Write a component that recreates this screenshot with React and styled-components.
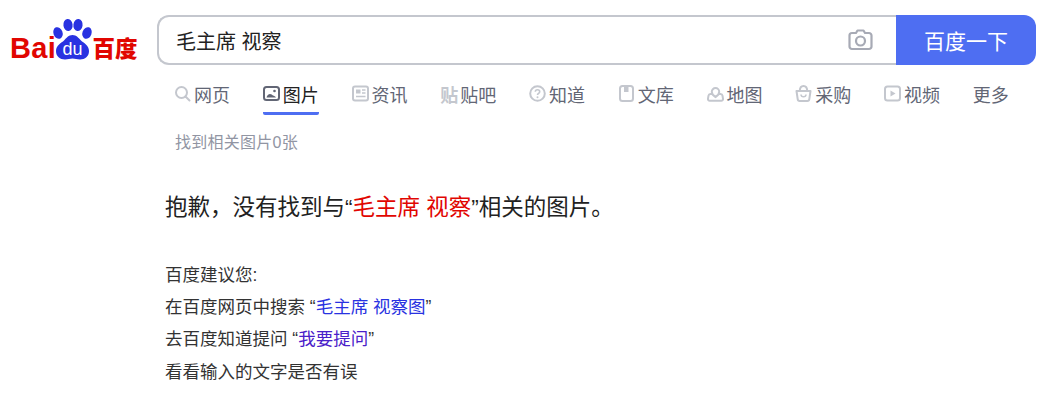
import React from "react";
import styled, { createGlobalStyle } from "styled-components";

const GlobalStyle = createGlobalStyle`
  html, body {
    margin: 0;
    padding: 0;
    background: #fff;
    font-family: "Liberation Sans", Arial, "Noto Sans CJK SC", sans-serif;
  }
`;

const Page = styled.div`
  width: 1045px;
  height: 403px;
  overflow: hidden;
`;

const Header = styled.header`
  display: flex;
  align-items: flex-start;
  padding: 15px 9px 0 10px;
`;

const LogoBox = styled.a`
  display: block;
  width: 127px;
  height: 44px;
  margin: 3px 20px 0 0;
  flex: none;
`;

const SearchForm = styled.form`
  flex: 1;
  display: flex;
  height: 50px;
`;

const SearchField = styled.div`
  flex: 1;
  display: flex;
  align-items: center;
  box-sizing: border-box;
  border: 2px solid #c4c7ce;
  border-right: 0;
  border-radius: 12px 0 0 12px;
  padding: 0 23px 0 18px;
`;

const SearchText = styled.span`
  flex: 1;
  font-size: 20px;
  margin-left: -1px;
  color: #222;
`;

const SearchButton = styled.button`
  width: 140px;
  border: 0;
  padding: 0;
  border-radius: 0 12px 12px 0;
  background: #4e6ef2;
  color: #fff;
  font-family: inherit;
  font-size: 21px;
`;

const Nav = styled.nav`
  display: flex;
  gap: 32.75px;
  padding: 16px 0 0 174px;
`;

const Tab = styled.a`
  display: flex;
  align-items: center;
  gap: 3px;
  height: 25px;
  padding-bottom: 6px;
  border-bottom: 3px solid transparent;
  border-radius: 0 0 2px 2px;
  font-size: 18px;
  white-space: nowrap;
  color: ${(p) => (p.$active ? "#222" : "#626675")};
  border-color: ${(p) => (p.$active ? "#4e6ef2" : "transparent")};
`;

const IconSvg = styled.svg`
  width: 17px;
  height: 17px;
  flex: none;
  fill: none;
  stroke: ${(p) => (p.$active ? "#626675" : "#c4c7ce")};
  stroke-width: 2;
`;

const GlyphIcon = styled.span`
  width: 17px;
  font-size: 18px;
  font-weight: 700;
  color: #c4c7ce;
`;

const Count = styled.p`
  margin: 18px 0 0 175px;
  font-size: 16px;
  letter-spacing: 0.25px;
  line-height: 20px;
  color: #9195a3;
`;

const Content = styled.main`
  padding: 39px 0 0 165px;
`;

const Message = styled.h2`
  margin: 0;
  font-size: 22.5px;
  font-weight: 400;
  line-height: 32px;
  color: #222;
`;

const Hit = styled.span`
  color: #e10601;
`;

const Suggestions = styled.ul`
  list-style: none;
  margin: 35px 0 0;
  padding: 0;
  font-size: 17.5px;
  line-height: 32.2px;
  color: #333;
`;

const SuggestLink = styled.a`
  color: ${(p) => (p.$visited ? "#4a20c9" : "#2932e1")};
`;

const Logo = () => (
  <svg width="127" height="44" viewBox="0 0 127 44" overflow="visible">
    <g fill="#e10601" fontFamily="'Liberation Sans', sans-serif" fontWeight="700">
      <text x="0" y="40" fontSize="29" letterSpacing="0.3">Bai</text>
      <text x="82.500" y="39" fontSize="22.500" fontFamily="'Noto Sans CJK SC', sans-serif" fontWeight="900">百度</text>
    </g>
    <g fill="#2932e1">
      <ellipse cx="48" cy="15" rx="4.600" ry="6" transform="rotate(-20 48 15)" />
      <ellipse cx="58" cy="7" rx="4.600" ry="6" transform="rotate(-8 58 7)" />
      <ellipse cx="68" cy="7" rx="4.600" ry="6" transform="rotate(8 68 7)" />
      <ellipse cx="77" cy="15" rx="4.600" ry="6" transform="rotate(20 77 15)" />
      <path d="M62.500 17c4 0 6 3 8.500 5.500 2.500 2.500 8 4.500 8 10.500 0 5.500-4 8.500-9 8.500-3 0-5-1-7.500-1s-4.500 1-7.500 1c-5 0-9-3-9-8.500 0-6 5.500-8 8-10.500 2.500-2.500 4.500-5.500 8.500-5.500z" />
    </g>
    <text x="62.500" y="37" fill="#fff" fontSize="18" textAnchor="middle" fontFamily="'Liberation Sans', sans-serif">du</text>
  </svg>
);

const SearchIcon = () => (
  <IconSvg viewBox="0 0 17 17">
    <circle cx="7.500" cy="7.500" r="5.500" />
    <path d="M11.500 11.500l4 4" strokeLinecap="round" />
  </IconSvg>
);

const ImageIcon = () => (
  <IconSvg viewBox="0 0 17 17" $active>
    <rect x="1" y="2" width="15" height="13" rx="2.500" />
    <circle cx="11.500" cy="6" r="1.300" fill="#626675" stroke="none" />
    <path d="M3.500 12.500c.5-2 2-3.500 3.500-3.500s2 1 3 1.500 2.500.5 3 2z" fill="#626675" stroke="none" />
  </IconSvg>
);

const NewsIcon = () => (
  <IconSvg viewBox="0 0 17 17">
    <rect x="1" y="1.500" width="15" height="14" rx="2" />
    <rect x="4" y="4.500" width="4.500" height="4" fill="#c4c7ce" stroke="none" />
    <path d="M10 5h3.500M10 8h3.500M4 11.500h9.500" strokeWidth="1.500" />
  </IconSvg>
);

const QuestionIcon = () => (
  <IconSvg viewBox="0 0 17 17">
    <circle cx="8.500" cy="8.500" r="7.300" />
    <path d="M6.300 6.800c0-1.300 1-2.100 2.200-2.100s2.200.8 2.200 2c0 1.700-2.200 1.700-2.200 3.300" strokeWidth="1.600" />
    <circle cx="8.500" cy="12.300" r="1" fill="#c4c7ce" stroke="none" />
  </IconSvg>
);

const BookIcon = () => (
  <IconSvg viewBox="0 0 17 17">
    <rect x="2" y="1" width="13" height="15" rx="2.500" />
    <path d="M6 1.500v5.500h4.500V1.500" fill="#c4c7ce" stroke="none" />
  </IconSvg>
);

const MapIcon = () => (
  <IconSvg viewBox="0 0 17 17">
    <path d="M5.500 9H3.500a2 2 0 0 0-2 1.700l-.5 3a1.700 1.700 0 0 0 1.700 2h11.600a1.700 1.700 0 0 0 1.700-2l-.5-3a2 2 0 0 0-2-1.700h-2" />
    <path d="M8.500 12c-2.200-1.200-3.700-3-3.700-5.200a3.700 3.700 0 0 1 7.400 0c0 2.200-1.500 4-3.700 5.200z" />
  </IconSvg>
);

const BasketIcon = () => (
  <IconSvg viewBox="0 0 17 17">
    <path d="M1.500 6h14l-1.200 8.200a2 2 0 0 1-2 1.800H4.700a2 2 0 0 1-2-1.800z" strokeLinejoin="round" />
    <path d="M4.800 6c0-3 1.500-5 3.700-5s3.700 2 3.700 5" />
    <path d="M6 9.500c0 3 5 3 5 0" strokeWidth="1.500" />
  </IconSvg>
);

const PlayIcon = () => (
  <IconSvg viewBox="0 0 17 17">
    <rect x="1" y="1.500" width="15" height="14" rx="2.500" />
    <path d="M6.500 5.500l5 3-5 3z" fill="#c4c7ce" stroke="none" />
  </IconSvg>
);

const CameraIcon = () => (
  <svg width="25" height="22" viewBox="0 0 25 22" fill="none" stroke="#a7aab5" strokeWidth="2.200">
    <path d="M8 4l1.500-2.500h6L17 4h4a2.500 2.500 0 0 1 2.500 2.500v11A2.500 2.500 0 0 1 21 20H4a2.500 2.500 0 0 1-2.500-2.500v-11A2.500 2.500 0 0 1 4 4z" strokeLinejoin="round" />
    <circle cx="12.500" cy="12" r="4.500" />
  </svg>
);

const tabs = [
  { label: "网页", icon: <SearchIcon /> },
  { label: "图片", icon: <ImageIcon />, active: true },
  { label: "资讯", icon: <NewsIcon /> },
  { label: "贴吧", icon: <GlyphIcon>贴</GlyphIcon> },
  { label: "知道", icon: <QuestionIcon /> },
  { label: "文库", icon: <BookIcon /> },
  { label: "地图", icon: <MapIcon /> },
  { label: "采购", icon: <BasketIcon /> },
  { label: "视频", icon: <PlayIcon /> },
  { label: "更多" },
];

export default function App() {
  return (
    <Page>
      <GlobalStyle />
      <Header>
        <LogoBox>
          <Logo />
        </LogoBox>
        <SearchForm>
          <SearchField>
            <SearchText>毛主席 视察</SearchText>
            <CameraIcon />
          </SearchField>
          <SearchButton type="button">百度一下</SearchButton>
        </SearchForm>
      </Header>
      <Nav>
        {tabs.map((tab) => (
          <Tab key={tab.label} $active={tab.active}>
            {tab.icon}
            {tab.label}
          </Tab>
        ))}
      </Nav>
      <Count>找到相关图片0张</Count>
      <Content>
        <Message>
          抱歉，没有找到与“<Hit>毛主席 视察</Hit>”相关的图片。
        </Message>
        <Suggestions>
          <li>百度建议您:</li>
          <li>
            在百度网页中搜索 “<SuggestLink>毛主席 视察图</SuggestLink>”
          </li>
          <li>
            去百度知道提问 “<SuggestLink $visited>我要提问</SuggestLink>”
          </li>
          <li>看看输入的文字是否有误</li>
        </Suggestions>
      </Content>
    </Page>
  );
}
